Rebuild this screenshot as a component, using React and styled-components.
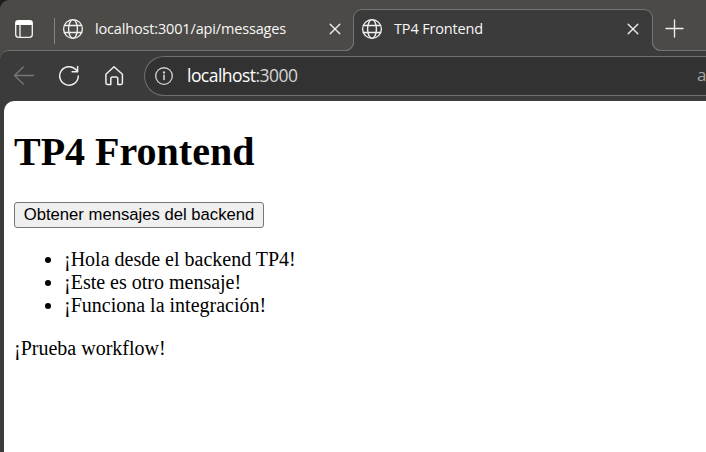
import React from "react";
import styled, { createGlobalStyle } from "styled-components";

const strip = "#4b4a47";
const bar = "#3b3b3b";
const line = "#757472";

const GlobalStyle = createGlobalStyle`
  *, *::before, *::after { box-sizing: border-box; }
  body { margin: 0; overflow: hidden; background: ${bar}; }
`;

const Window = styled.div`
  display: flex;
  flex-direction: column;
  width: 706px;
  height: 452px;
  overflow: hidden;
  background: ${bar};
  font-family: "Open Sans", "Noto Sans", sans-serif;
`;

const StripBack = styled.div`
  flex: none;
  background: #1d1c1b;
`;

const TabStrip = styled.div`
  display: flex;
  height: 50px;
  background: ${strip};
  border-top-left-radius: 9px;
`;

const TabActions = styled.div`
  display: flex;
  align-items: center;
  width: 54px;
  padding: 8px 0 0 14px;
`;

const Divider = styled.div`
  width: 1px;
  height: 26px;
  margin-top: 18px;
  background: #858481;
`;

const Tab = styled.div`
  display: flex;
  align-items: center;
  width: ${(p) => (p.$active ? 300 : 298)}px;
  height: ${(p) => (p.$active ? 42 : 41)}px;
  margin-top: 9px;
  padding: ${(p) => (p.$active ? "0 13px 3px 7px" : "0 12px 1px 7px")};
  position: relative;
  z-index: 1;
  ${(p) =>
    p.$active &&
    `
    background: ${bar};
    border: 1px solid ${line};
    border-bottom: 0;
    border-radius: 9px 9px 0 0;
    &::before, &::after {
      content: "";
      position: absolute;
      bottom: 0;
      width: 9px;
      height: 9px;
    }
    &::before {
      left: -9px;
      background: radial-gradient(circle at 0 0, ${strip} 7.6px, ${line} 8.2px, ${line} 8.8px, ${bar} 9.4px);
    }
    &::after {
      right: -9px;
      background: radial-gradient(circle at 100% 0, ${strip} 7.6px, ${line} 8.2px, ${line} 8.8px, ${bar} 9.4px);
    }
  `}
`;

const TabTitle = styled.span`
  flex: 1;
  margin-left: 11px;
  color: #f7f7f7;
  font-size: 14.5px;
  line-height: 20px;
  letter-spacing: ${(p) => p.$spacing}px;
  white-space: nowrap;
`;

const NewTab = styled.div`
  padding: 19px 0 0 12px;
`;

const Toolbar = styled.div`
  display: flex;
  flex: none;
  height: 51px;
  align-items: flex-start;
  background: ${bar};
  border-top: 1px solid ${line};
  border-top-left-radius: 9px;
`;

const ToolbarBack = styled.div`
  flex: none;
  background: ${strip};
`;

const NavButtons = styled.div`
  display: flex;
  align-items: center;
  gap: 23px;
  width: 144px;
  padding: 14px 0 0 13px;
`;

const AddressBar = styled.div`
  display: flex;
  flex: 1;
  align-items: center;
  height: 40px;
  margin-top: 5px;
  padding-left: 9px;
  background: #323232;
  border: 1px solid #706f6e;
  border-right: 0;
  border-radius: 20px 0 0 20px;
  overflow: hidden;
`;

const Address = styled.span`
  flex: 1;
  margin-left: 13px;
  color: #fff;
  font-size: 17.5px;
  line-height: 24px;
  letter-spacing: -0.54px;
  transform: translateY(-1px);
`;

const Port = styled.span`
  color: #d5d5d5;
`;

const ReadAloud = styled.span`
  width: 9px;
  color: #a4a4a4;
  font-size: 17px;
  line-height: 24px;
  transform: translateY(-1px);
`;

const Page = styled.main`
  flex: 1;
  margin-left: 4px;
  padding: 0 10px;
  background: #fff;
  border-top-left-radius: 10px;
  color: #000;
  font: 20px/23px "Liberation Serif", "Times New Roman", serif;
`;

const Heading = styled.h1`
  margin: 0;
  padding-top: 28px;
  font-size: 40px;
  line-height: 46px;
`;

const FetchButton = styled.button`
  display: block;
  width: 250px;
  height: 26px;
  margin: 27px 0 0;
  padding: 0;
  background: #efefef;
  border: 1px solid #767676;
  border-radius: 3px;
  color: #000;
  font: 16.67px/22px "Liberation Sans", Arial, sans-serif;
  white-space: nowrap;
`;

const Messages = styled.ul`
  margin: 20px 0;
  padding-left: 50px;
`;

const Note = styled.p`
  margin: 0;
`;

const Glyph = styled.svg`
  display: block;
  flex: none;
  fill: none;
  stroke: ${(p) => p.$color || "#f0f0f0"};
  stroke-width: ${(p) => p.$weight || 1.35};
  stroke-linecap: round;
  stroke-linejoin: round;
`;

const Globe = () => (
  <Glyph width="22" height="22" viewBox="0 0 22 22">
    <circle cx="11" cy="11" r="9.4" />
    <ellipse cx="11" cy="11" rx="4.4" ry="9.4" />
    <path d="M2.5 7.5h17M2.5 14.5h17" />
  </Glyph>
);

const Close = () => (
  <Glyph width="12" height="12" viewBox="0 0 12 12">
    <path d="M1.2 1.2l9.6 9.6M10.8 1.2L1.2 10.8" />
  </Glyph>
);

const messages = [
  "¡Hola desde el backend TP4!",
  "¡Este es otro mensaje!",
  "¡Funciona la integración!",
];

export default function App() {
  return (
    <Window>
      <GlobalStyle />
      <StripBack>
        <TabStrip>
          <TabActions>
            <Glyph width="20" height="20" viewBox="0 0 20 20">
              <rect x="1.7" y="1.7" width="16.6" height="16.6" rx="2.8" />
              <path d="M1.5 6V4.3a3 3 0 0 1 3-3h11a3 3 0 0 1 3 3V6z" fill="#fff" stroke="none" />
              <path d="M6 6v12" />
            </Glyph>
          </TabActions>
          <Divider />
          <Tab>
            <Globe />
            <TabTitle $spacing={-0.16}>localhost:3001/api/messages</TabTitle>
            <Close />
          </Tab>
          <Tab $active>
            <Globe />
            <TabTitle $spacing={-0.16}>TP4 Frontend</TabTitle>
            <Close />
          </Tab>
          <NewTab>
            <Glyph width="19" height="19" viewBox="0 0 19 19">
              <path d="M9.5 1v17M1 9.5h17" />
            </Glyph>
          </NewTab>
        </TabStrip>
      </StripBack>
      <ToolbarBack>
        <Toolbar>
          <NavButtons>
            <Glyph width="22" height="22" viewBox="0 0 22 22" $color="#777">
              <path d="M20.5 10.5H1.5M10.3 2L1.5 10.5l8.8 8.5" />
            </Glyph>
            <Glyph width="22" height="22" viewBox="0 0 22 22" $weight={1.5}>
              <path d="M20.3 11A9.3 9.3 0 1 1 17.8 4.6L19.6 6.6M19.6 1.5v5.3h-5.5" />
            </Glyph>
            <Glyph width="22" height="22" viewBox="0 0 22 22" $weight={1.5}>
              <path d="M2.9 9.2L11 1.8l8.4 7.4v8.9a1.3 1.3 0 0 1-1.3 1.3h-3.3v-5.6a1.8 1.8 0 0 0-1.8-1.8h-3.4a1.8 1.8 0 0 0-1.8 1.8v5.6H4.2a1.3 1.3 0 0 1-1.3-1.3z" />
            </Glyph>
          </NavButtons>
          <AddressBar>
            <Glyph width="20" height="20" viewBox="0 0 20 20" $color="#d0d0d0">
              <circle cx="10" cy="10" r="8.3" />
              <path d="M10 9.3v4.2" strokeWidth="1.6" />
              <circle cx="10" cy="6.5" r=".5" fill="#d0d0d0" />
            </Glyph>
            <Address>
              localhost<Port>:3000</Port>
            </Address>
            <ReadAloud>a</ReadAloud>
          </AddressBar>
        </Toolbar>
      </ToolbarBack>
      <Page>
        <Heading>TP4 Frontend</Heading>
        <FetchButton>Obtener mensajes del backend</FetchButton>
        <Messages>
          {messages.map((m) => (
            <li key={m}>{m}</li>
          ))}
        </Messages>
        <Note>¡Prueba workflow!</Note>
      </Page>
    </Window>
  );
}
